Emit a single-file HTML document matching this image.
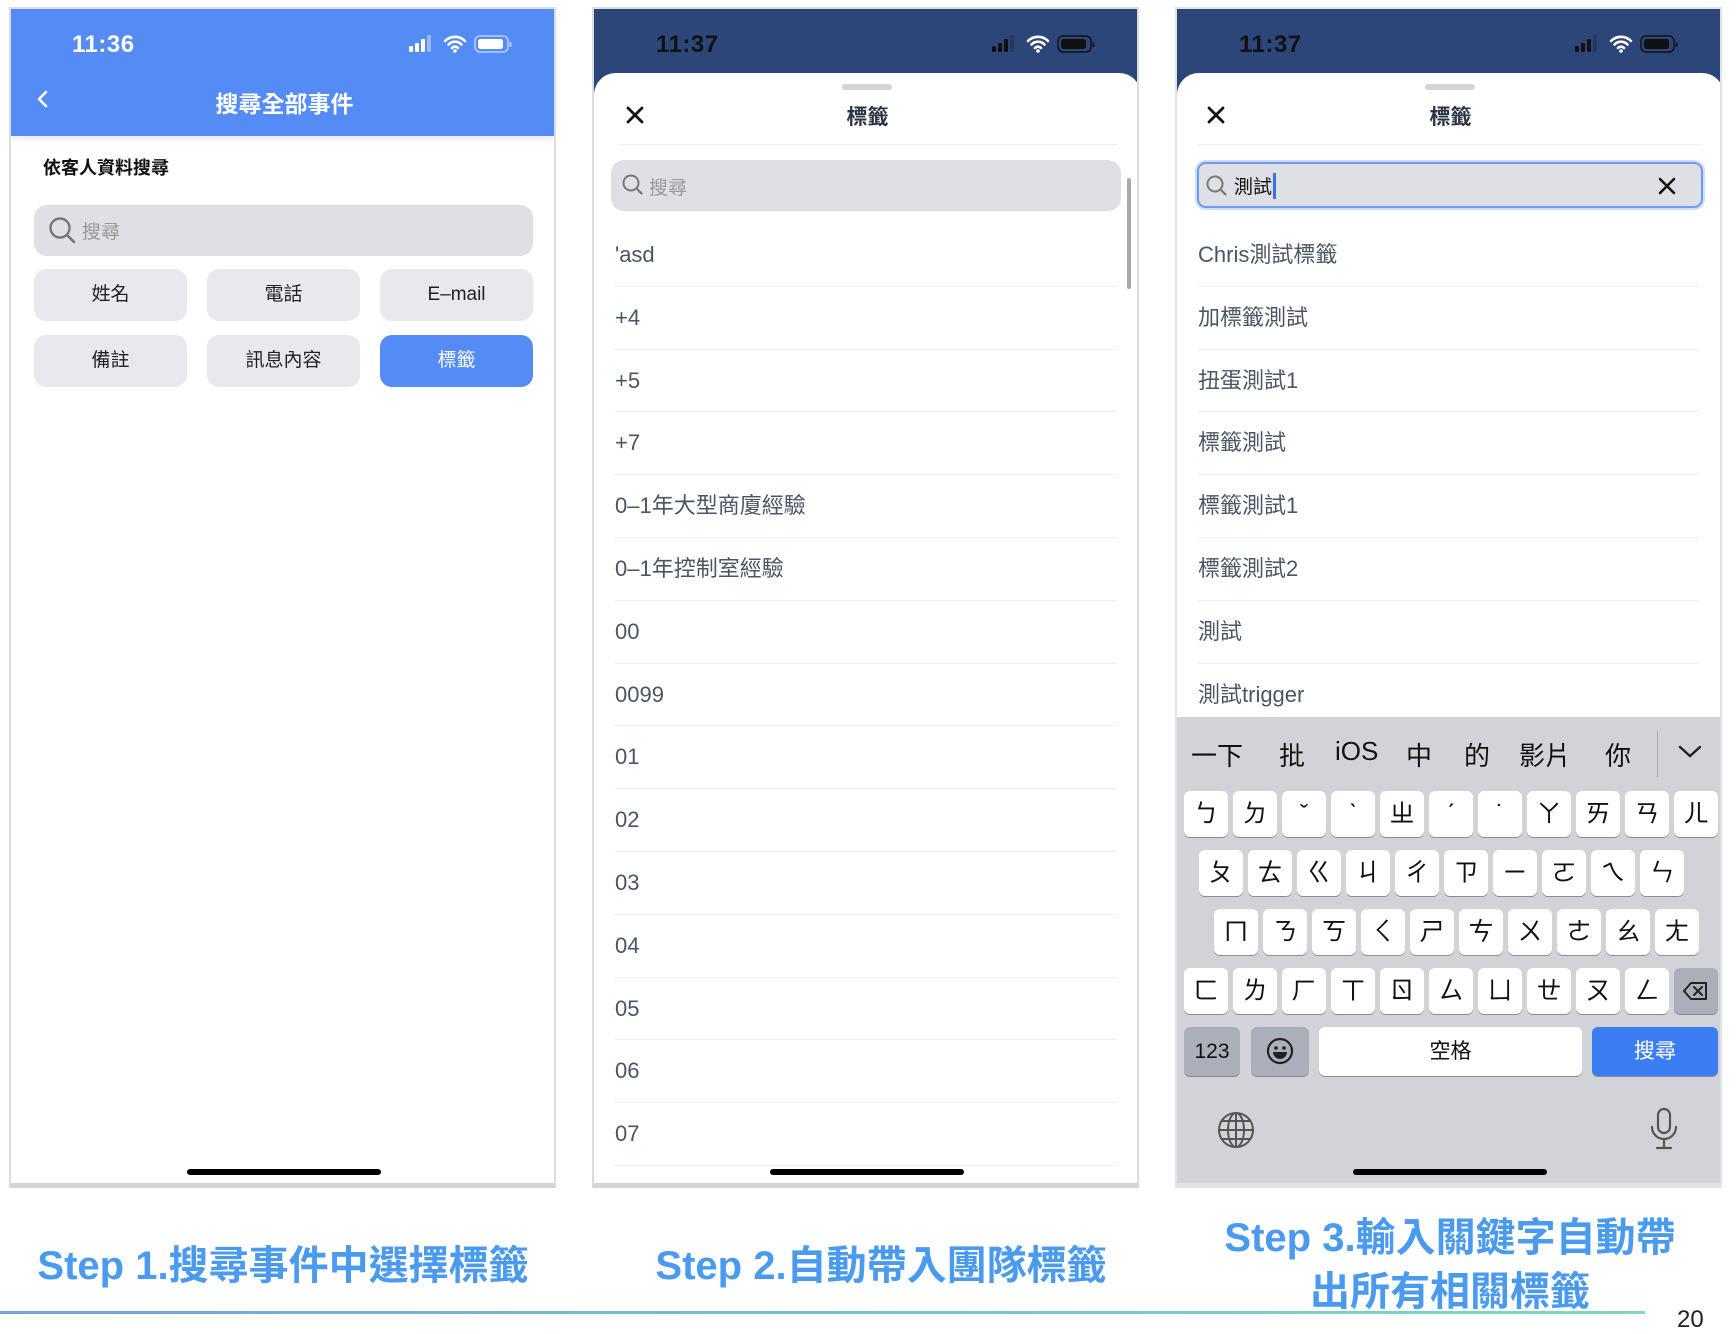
<!DOCTYPE html>
<html><head><meta charset="utf-8">
<style>
*{margin:0;padding:0;box-sizing:border-box}
body{width:1736px;height:1314px;background:#fff;position:relative;overflow:hidden;font-family:"Liberation Sans","Noto Sans CJK TC",sans-serif}
.a{position:absolute}
.panel{position:absolute;top:7px;width:547px;height:1181px;border:2px solid #dcdcdc;border-bottom:5px solid #d4d4d4;overflow:hidden;background:#fff}
.time{position:absolute;top:22px;font-size:24px;font-weight:bold;letter-spacing:0.5px}
.btn{position:absolute;width:153px;height:52px;border-radius:12px;background:#e8e9ee;color:#222;font-size:19px;text-align:center;line-height:52px}
.row{position:absolute;left:21px;width:501px;height:62.8px;border-bottom:1px solid #eceef1;font-size:22px;color:#4a5566;line-height:62px}
.home{position:absolute;width:194px;height:6px;border-radius:3px;background:#000;top:1160px}
.key{position:absolute;width:44px;height:46px;background:#fff;border-radius:6px;box-shadow:0 1px 0 #8a8c92;font-size:25px;text-align:center;line-height:46px;color:#111}
.cap{position:absolute;color:#4a9bef;font-weight:bold;font-size:40px;text-align:center;white-space:nowrap}
.sb{position:absolute;top:25px}
</style></head><body>

<!-- PANEL 1 -->
<div class="panel" style="left:9px">
  <div class="a" style="left:0;top:0;width:547px;height:127px;background:#548bf5;box-shadow:0 3px 6px rgba(0,0,0,0.08)"></div>
  <div class="time" style="left:61px;color:#fff">11:36</div>
  <svg class="sb" style="left:398px" width="110" height="22" viewBox="0 0 110 22">
    <rect x="0" y="12" width="4" height="6" rx="1" fill="#fff"/><rect x="6" y="9" width="4" height="9" rx="1" fill="#fff"/><rect x="12" y="5" width="4" height="13" rx="1" fill="#fff"/><rect x="18" y="1" width="4" height="17" rx="1" fill="#fff" opacity=".4"/>
    <path d="M36 7a14 14 0 0 1 20 0M39.5 10.5a9 9 0 0 1 13 0M43 14a4 4 0 0 1 6 0" stroke="#fff" stroke-width="2.6" fill="none" stroke-linecap="round"/><circle cx="46" cy="17" r="1.8" fill="#fff"/>
    <rect x="66" y="2" width="33" height="16" rx="5" fill="none" stroke="#fff" stroke-opacity=".6" stroke-width="1.5"/><rect x="69" y="5" width="25" height="10" rx="2.5" fill="#fff"/><rect x="100.5" y="8" width="2" height="5" rx="1" fill="#fff" opacity=".6"/>
  </svg>
  <svg class="a" style="left:25px;top:80px" width="14" height="20" viewBox="0 0 14 20"><path d="M10 3L3 10l7 7" stroke="#fff" stroke-width="2.6" fill="none" stroke-linecap="round" stroke-linejoin="round"/></svg>
  <div class="a" style="left:0;width:547px;top:76px;text-align:center;color:#fff;font-size:23px;font-weight:bold">搜尋全部事件</div>
  <div class="a" style="left:32px;top:145px;font-size:18px;font-weight:bold;color:#111">依客人資料搜尋</div>
  <div class="a" style="left:23px;top:196px;width:499px;height:51px;border-radius:13px;background:#dfe0e5"></div>
  <svg class="a" style="left:37px;top:207px" width="30" height="30" viewBox="0 0 30 30"><circle cx="12" cy="12" r="9.5" stroke="#777" stroke-width="2.4" fill="none"/><path d="M19 19l7 7" stroke="#777" stroke-width="2.6" stroke-linecap="round"/></svg>
  <div class="a" style="left:71px;top:208px;font-size:19px;color:#999">搜尋</div>
  <div class="btn" style="left:23px;top:260px">姓名</div>
  <div class="btn" style="left:196px;top:260px">電話</div>
  <div class="btn" style="left:369px;top:260px">E–mail</div>
  <div class="btn" style="left:23px;top:326px">備註</div>
  <div class="btn" style="left:196px;top:326px">訊息內容</div>
  <div class="btn" style="left:369px;top:326px;background:#548bf5;color:#fff">標籤</div>
  <div class="home" style="left:176px"></div>
</div>

<!-- PANEL 2 -->
<div class="panel" style="left:592px;background:#2c4679">
  <div class="time" style="left:62px;color:#111">11:37</div>
  <svg class="sb" style="left:398px" width="110" height="22" viewBox="0 0 110 22">
    <rect x="0" y="12" width="4" height="6" rx="1" fill="#111"/><rect x="6" y="9" width="4" height="9" rx="1" fill="#111"/><rect x="12" y="5" width="4" height="13" rx="1" fill="#111"/><rect x="18" y="1" width="4" height="17" rx="1" fill="#111" opacity=".25"/>
    <path d="M36 7a14 14 0 0 1 20 0M39.5 10.5a9 9 0 0 1 13 0M43 14a4 4 0 0 1 6 0" stroke="#fff" stroke-width="2.6" fill="none" stroke-linecap="round"/><circle cx="46" cy="17" r="1.8" fill="#fff"/>
    <rect x="66" y="2" width="33" height="16" rx="5" fill="none" stroke="#111" stroke-width="1.5"/><rect x="69" y="5" width="25" height="10" rx="2.5" fill="#111"/><rect x="100.5" y="8" width="2" height="5" rx="1" fill="#111"/>
  </svg>
  <div class="a" style="left:0;top:64px;width:547px;height:1200px;background:#fff;border-radius:22px 22px 0 0"></div>
  <div class="a" style="left:248px;top:75px;width:50px;height:6px;border-radius:3px;background:#d4d4d6"></div>
  <svg class="a" style="left:31px;top:96px" width="20" height="20" viewBox="0 0 20 20"><path d="M3 3l14 14M17 3L3 17" stroke="#111" stroke-width="2.8" stroke-linecap="round"/></svg>
  <div class="a" style="left:0;width:547px;top:92px;text-align:center;font-size:21px;font-weight:bold;color:#2a3445">標籤</div>
  <div class="a" style="left:23px;top:135px;width:501px;height:1px;background:#eceef1"></div>
  <div class="a" style="left:17px;top:151px;width:510px;height:51px;border-radius:13px;background:#dfe0e5"></div>
  <svg class="a" style="left:27px;top:164px" width="24" height="24" viewBox="0 0 24 24"><circle cx="10" cy="10" r="7.5" stroke="#777" stroke-width="2" fill="none"/><path d="M15.5 15.5l5 5" stroke="#777" stroke-width="2.2" stroke-linecap="round"/></svg>
  <div class="a" style="left:55px;top:164px;font-size:19px;color:#999">搜尋</div>
  <div class="a" style="left:533px;top:169px;width:4px;height:111px;border-radius:2px;background:#a9a9ab"></div>
  <div class="row" style="top:215px">'asd</div>
  <div class="row" style="top:277.8px">+4</div>
  <div class="row" style="top:340.6px">+5</div>
  <div class="row" style="top:403.4px">+7</div>
  <div class="row" style="top:466.2px">0–1年大型商廈經驗</div>
  <div class="row" style="top:529px">0–1年控制室經驗</div>
  <div class="row" style="top:591.8px">00</div>
  <div class="row" style="top:654.6px">0099</div>
  <div class="row" style="top:717.4px">01</div>
  <div class="row" style="top:780.2px">02</div>
  <div class="row" style="top:843px">03</div>
  <div class="row" style="top:905.8px">04</div>
  <div class="row" style="top:968.6px">05</div>
  <div class="row" style="top:1031.4px">06</div>
  <div class="row" style="top:1094.2px">07</div>
  <div class="home" style="left:176px"></div>
</div>

<!-- PANEL 3 -->
<div class="panel" style="left:1175px;background:#2c4679;border-color:#e2e2e2">
  <div class="time" style="left:62px;color:#111">11:37</div>
  <svg class="sb" style="left:398px" width="110" height="22" viewBox="0 0 110 22">
    <rect x="0" y="12" width="4" height="6" rx="1" fill="#111"/><rect x="6" y="9" width="4" height="9" rx="1" fill="#111"/><rect x="12" y="5" width="4" height="13" rx="1" fill="#111"/><rect x="18" y="1" width="4" height="17" rx="1" fill="#111" opacity=".25"/>
    <path d="M36 7a14 14 0 0 1 20 0M39.5 10.5a9 9 0 0 1 13 0M43 14a4 4 0 0 1 6 0" stroke="#fff" stroke-width="2.6" fill="none" stroke-linecap="round"/><circle cx="46" cy="17" r="1.8" fill="#fff"/>
    <rect x="66" y="2" width="33" height="16" rx="5" fill="none" stroke="#111" stroke-width="1.5"/><rect x="69" y="5" width="25" height="10" rx="2.5" fill="#111"/><rect x="100.5" y="8" width="2" height="5" rx="1" fill="#111"/>
  </svg>
  <div class="a" style="left:0;top:64px;width:547px;height:1200px;background:#fff;border-radius:22px 22px 0 0"></div>
  <div class="a" style="left:248px;top:75px;width:50px;height:6px;border-radius:3px;background:#d4d4d6"></div>
  <svg class="a" style="left:29px;top:96px" width="20" height="20" viewBox="0 0 20 20"><path d="M3 3l14 14M17 3L3 17" stroke="#111" stroke-width="2.8" stroke-linecap="round"/></svg>
  <div class="a" style="left:0;width:547px;top:92px;text-align:center;font-size:21px;font-weight:bold;color:#2a3445">標籤</div>
  <div class="a" style="left:21px;top:135px;width:503px;height:1px;background:#eceef1"></div>
  <div class="a" style="left:20px;top:153px;width:506px;height:46px;border-radius:9px;background:#dfe0e5;border:2px solid #6c9bf5;box-shadow:0 0 0 2px #cfdcfb"></div>
  <svg class="a" style="left:28px;top:165px" width="24" height="24" viewBox="0 0 24 24"><circle cx="10" cy="10" r="7.5" stroke="#777" stroke-width="2" fill="none"/><path d="M15.5 15.5l5 5" stroke="#777" stroke-width="2.2" stroke-linecap="round"/></svg>
  <div class="a" style="left:57px;top:163px;font-size:19px;color:#111">測試</div>
  <div class="a" style="left:96px;top:164px;width:3px;height:26px;background:#3d6ff0"></div>
  <svg class="a" style="left:480px;top:167px" width="20" height="20" viewBox="0 0 20 20"><path d="M3 3l14 14M17 3L3 17" stroke="#111" stroke-width="2.6" stroke-linecap="round"/></svg>
  <div class="row" style="top:215px">Chris測試標籤</div>
  <div class="row" style="top:277.8px">加標籤測試</div>
  <div class="row" style="top:340.6px">扭蛋測試1</div>
  <div class="row" style="top:403.4px">標籤測試</div>
  <div class="row" style="top:466.2px">標籤測試1</div>
  <div class="row" style="top:529px">標籤測試2</div>
  <div class="row" style="top:591.8px">測試</div>
  <div class="row" style="top:654.6px">測試trigger</div>

  <!-- keyboard -->
  <div class="a" style="left:0;top:708px;width:547px;height:480px;background:#d1d3d9"></div>
  <div class="a" style="top:727px;left:0;width:547px;font-size:26px;color:#111;height:40px">
    <span class="a" style="left:14px">一下</span><span class="a" style="left:102px">批</span><span class="a" style="left:158px">iOS</span><span class="a" style="left:229px">中</span><span class="a" style="left:287px">的</span><span class="a" style="left:342px">影片</span><span class="a" style="left:428px">你</span>
  </div>
  <div class="a" style="left:480px;top:722px;width:1px;height:46px;background:#a8aab0"></div>
  <svg class="a" style="left:500px;top:735px" width="26" height="16" viewBox="0 0 26 16"><path d="M3 3l10 9 10-9" stroke="#222" stroke-width="2.4" fill="none" stroke-linecap="round"/></svg>
  <!-- row1 -->
  <div class="key" style="left:7px;top:782px">ㄅ</div><div class="key" style="left:56px;top:782px">ㄉ</div><div class="key" style="left:105px;top:782px">ˇ</div><div class="key" style="left:154px;top:782px">ˋ</div><div class="key" style="left:203px;top:782px">ㄓ</div><div class="key" style="left:252px;top:782px">ˊ</div><div class="key" style="left:301px;top:782px">˙</div><div class="key" style="left:350px;top:782px">ㄚ</div><div class="key" style="left:399px;top:782px">ㄞ</div><div class="key" style="left:448px;top:782px">ㄢ</div><div class="key" style="left:497px;top:782px">ㄦ</div>
  <!-- row2 -->
  <div class="key" style="left:22px;top:841px">ㄆ</div><div class="key" style="left:71px;top:841px">ㄊ</div><div class="key" style="left:120px;top:841px">ㄍ</div><div class="key" style="left:169px;top:841px">ㄐ</div><div class="key" style="left:218px;top:841px">ㄔ</div><div class="key" style="left:267px;top:841px">ㄗ</div><div class="key" style="left:316px;top:841px">ㄧ</div><div class="key" style="left:365px;top:841px">ㄛ</div><div class="key" style="left:414px;top:841px">ㄟ</div><div class="key" style="left:463px;top:841px">ㄣ</div>
  <!-- row3 -->
  <div class="key" style="left:37px;top:900px">ㄇ</div><div class="key" style="left:86px;top:900px">ㄋ</div><div class="key" style="left:135px;top:900px">ㄎ</div><div class="key" style="left:184px;top:900px">ㄑ</div><div class="key" style="left:233px;top:900px">ㄕ</div><div class="key" style="left:282px;top:900px">ㄘ</div><div class="key" style="left:331px;top:900px">ㄨ</div><div class="key" style="left:380px;top:900px">ㄜ</div><div class="key" style="left:429px;top:900px">ㄠ</div><div class="key" style="left:478px;top:900px">ㄤ</div>
  <!-- row4 -->
  <div class="key" style="left:7px;top:959px">ㄈ</div><div class="key" style="left:56px;top:959px">ㄌ</div><div class="key" style="left:105px;top:959px">ㄏ</div><div class="key" style="left:154px;top:959px">ㄒ</div><div class="key" style="left:203px;top:959px">ㄖ</div><div class="key" style="left:252px;top:959px">ㄙ</div><div class="key" style="left:301px;top:959px">ㄩ</div><div class="key" style="left:350px;top:959px">ㄝ</div><div class="key" style="left:399px;top:959px">ㄡ</div><div class="key" style="left:448px;top:959px">ㄥ</div>
  <div class="key" style="left:497px;top:959px;background:#abafba">
    <svg width="26" height="20" viewBox="0 0 26 20" style="margin-top:13px"><path d="M8 2h15v16H8L1 10z" fill="none" stroke="#222" stroke-width="2" stroke-linejoin="round"/><path d="M11 6l8 8M19 6l-8 8" stroke="#222" stroke-width="2" stroke-linecap="round"/></svg>
  </div>
  <!-- row5 -->
  <div class="key" style="left:7px;top:1018px;width:56px;height:49px;background:#abafba;font-size:21px;line-height:49px">123</div>
  <div class="key" style="left:74px;top:1018px;width:58px;height:49px;background:#abafba">
    <svg width="30" height="30" viewBox="0 0 30 30" style="margin-top:9px"><circle cx="15" cy="15" r="12" fill="none" stroke="#222" stroke-width="2.2"/><circle cx="11" cy="12" r="1.8" fill="#222"/><circle cx="19" cy="12" r="1.8" fill="#222"/><path d="M8 16h14a7 7 0 0 1-14 0z" fill="#222"/></svg>
  </div>
  <div class="key" style="left:142px;top:1018px;width:263px;height:49px;font-size:21px;line-height:49px">空格</div>
  <div class="key" style="left:415px;top:1018px;width:126px;height:49px;background:#3b7ef4;color:#fff;font-size:21px;line-height:49px">搜尋</div>
  <svg class="a" style="left:40px;top:1102px" width="38" height="38" viewBox="0 0 38 38"><g fill="none" stroke="#555" stroke-width="2"><circle cx="19" cy="19" r="17"/><ellipse cx="19" cy="19" rx="8" ry="17"/><path d="M19 2v34M2 19h34M5 10h28M5 28h28"/></g></svg>
  <svg class="a" style="left:472px;top:1098px" width="30" height="44" viewBox="0 0 30 44"><g fill="none" stroke="#555" stroke-width="2.2" stroke-linecap="round"><rect x="9" y="2" width="12" height="24" rx="6"/><path d="M3 20a12 12 0 0 0 24 0M15 32v8M8 41h14"/></g></svg>
  <div class="home" style="left:176px"></div>
</div>

<!-- captions -->
<div class="cap" style="left:0;width:566px;top:1233px">Step 1.搜尋事件中選擇標籤</div>
<div class="cap" style="left:592px;width:578px;top:1233px">Step 2.自動帶入團隊標籤</div>
<div class="cap" style="left:1175px;width:550px;top:1211px;line-height:54px">Step 3.輸入關鍵字自動帶<br>出所有相關標籤</div>
<div class="a" style="left:0;top:1311px;width:1645px;height:3px;background:linear-gradient(90deg,#6fa6d8,#7fd8c8)"></div>
<div class="a" style="left:1677px;top:1306px;font-size:24px;color:#222">20</div>
</body></html>
